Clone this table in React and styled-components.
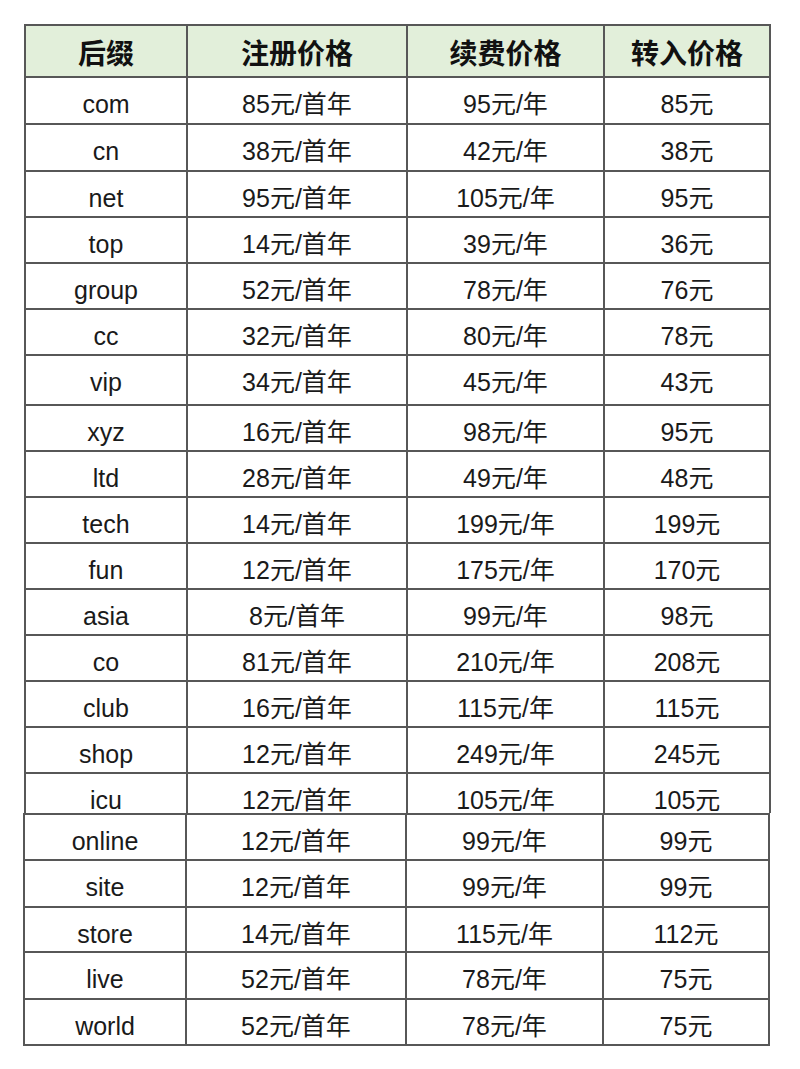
import React from 'react';
import styled, { createGlobalStyle } from 'styled-components';

const Global = createGlobalStyle`
  html, body { margin: 0; padding: 0; background: #ffffff; }
  body {
    font-family: "Liberation Sans", Arial, "Noto Sans CJK SC", sans-serif;
    color: #1a1a1a;
  }
`;

const Page = styled.div`
  width: 800px;
  height: 1069px;
  box-sizing: border-box;
  padding-top: 24px;
  overflow: hidden;
  background: #ffffff;
`;

const Sheet = styled.div`
  margin-left: ${(p) => p.$left}px;
  width: 747px;
  display: flex;
  flex-direction: column;
  border-bottom: ${(p) => (p.$closed ? '2px solid #575757' : 'none')};
`;

const Row = styled.div`
  display: grid;
  grid-template-columns: 162px 220px 197px 166px;
  height: ${(p) => p.$h}px;
  box-sizing: border-box;
  border-top: 2px solid #575757;
  border-right: 2px solid #575757;
  background: ${(p) => (p.$head ? '#e2efda' : '#ffffff')};
  overflow: hidden;
`;

const Cell = styled.div`
  box-sizing: border-box;
  border-left: 2px solid #575757;
  display: flex;
  justify-content: center;
  align-items: flex-start;
  padding-top: 12px;
  font-size: 25px;
  line-height: 28px;
  white-space: nowrap;
`;

const HeadCell = styled(Cell)`
  padding-top: 10px;
  font-family: "Noto Sans CJK SC", "Liberation Sans", sans-serif;
  font-weight: 700;
  font-size: 28px;
  line-height: 32px;
  color: #111111;
`;

const top = [
  ['com', '85元/首年', '95元/年', '85元', 47],
  ['cn', '38元/首年', '42元/年', '38元', 47],
  ['net', '95元/首年', '105元/年', '95元', 46],
  ['top', '14元/首年', '39元/年', '36元', 46],
  ['group', '52元/首年', '78元/年', '76元', 46],
  ['cc', '32元/首年', '80元/年', '78元', 46],
  ['vip', '34元/首年', '45元/年', '43元', 50],
  ['xyz', '16元/首年', '98元/年', '95元', 46],
  ['ltd', '28元/首年', '49元/年', '48元', 46],
  ['tech', '14元/首年', '199元/年', '199元', 46],
  ['fun', '12元/首年', '175元/年', '170元', 46],
  ['asia', '8元/首年', '99元/年', '98元', 46],
  ['co', '81元/首年', '210元/年', '208元', 46],
  ['club', '16元/首年', '115元/年', '115元', 46],
  ['shop', '12元/首年', '249元/年', '245元', 46],
  ['icu', '12元/首年', '105元/年', '105元', 41],
];

const bottom = [
  ['online', '12元/首年', '99元/年', '99元', 46],
  ['site', '12元/首年', '99元/年', '99元', 47],
  ['store', '14元/首年', '115元/年', '112元', 45],
  ['live', '52元/首年', '78元/年', '75元', 47],
  ['world', '52元/首年', '78元/年', '75元', 46],
];

const DataRow = ({ r }) => (
  <Row $h={r[4]}>
    <Cell>{r[0]}</Cell>
    <Cell>{r[1]}</Cell>
    <Cell>{r[2]}</Cell>
    <Cell>{r[3]}</Cell>
  </Row>
);

export default function App() {
  return (
    <Page>
      <Global />
      <Sheet $left={24}>
        <Row $h={52} $head>
          <HeadCell>后缀</HeadCell>
          <HeadCell>注册价格</HeadCell>
          <HeadCell>续费价格</HeadCell>
          <HeadCell>转入价格</HeadCell>
        </Row>
        {top.map((r) => (
          <DataRow key={r[0]} r={r} />
        ))}
      </Sheet>
      <Sheet $left={23} $closed>
        {bottom.map((r) => (
          <DataRow key={r[0]} r={r} />
        ))}
      </Sheet>
    </Page>
  );
}
